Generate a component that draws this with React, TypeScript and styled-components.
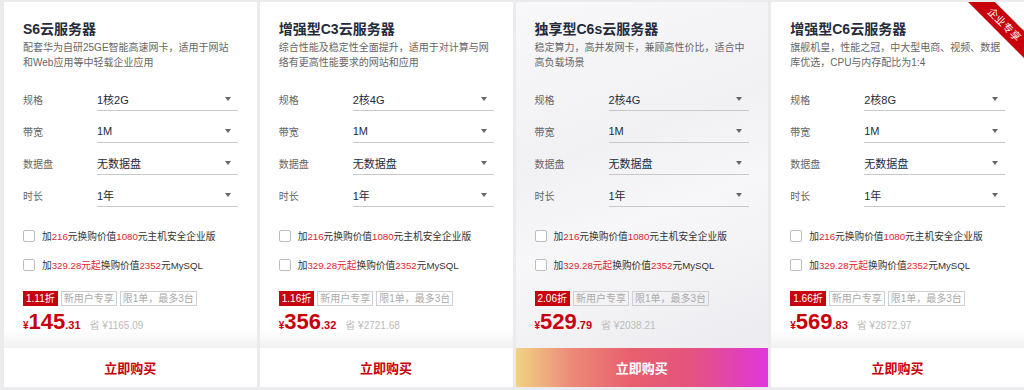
import * as React from 'react'
import styled, { createGlobalStyle } from 'styled-components'

const RED = '#c7000b'

const GlobalStyle = createGlobalStyle`
  body {
    margin: 0;
    background: #ebebee;
    font-family: 'Liberation Sans', 'Noto Sans CJK SC', sans-serif;
    color: #333;
  }
`

interface Plan {
  title: string
  desc: string[]
  spec: string
  discount: string
  price: string
  cents: string
  saved: string
  featured?: boolean
  ribbon?: string
}

const plans: Plan[] = [
  {
    title: 'S6云服务器',
    desc: ['配套华为自研25GE智能高速网卡，适用于网站', '和Web应用等中轻载企业应用'],
    spec: '1核2G',
    discount: '1.11折',
    price: '145',
    cents: '.31',
    saved: '省 ¥1165.09',
  },
  {
    title: '增强型C3云服务器',
    desc: ['综合性能及稳定性全面提升，适用于对计算与网', '络有更高性能要求的网站和应用'],
    spec: '2核4G',
    discount: '1.16折',
    price: '356',
    cents: '.32',
    saved: '省 ¥2721.68',
  },
  {
    title: '独享型C6s云服务器',
    desc: ['稳定算力，高并发网卡，兼顾高性价比，适合中', '高负载场景'],
    spec: '2核4G',
    discount: '2.06折',
    price: '529',
    cents: '.79',
    saved: '省 ¥2038.21',
    featured: true,
  },
  {
    title: '增强型C6云服务器',
    desc: ['旗舰机皇，性能之冠，中大型电商、视频、数据', '库优选，CPU与内存配比为1:4'],
    spec: '2核8G',
    discount: '1.66折',
    price: '569',
    cents: '.83',
    saved: '省 ¥2872.97',
    ribbon: '企业专享',
  },
]

const Page = styled.div`
  display: flex;
  gap: 3px;
  padding: 2px 0 3px 4px;
  height: 390px;
  box-sizing: border-box;
  overflow: hidden;
`

const Card = styled.div`
  flex: 1;
  min-width: 0;
  display: flex;
  flex-direction: column;
  position: relative;
  overflow: hidden;
  background: #fff;
`

const Body = styled.div<{ $featured?: boolean }>`
  flex: 1;
  padding: 16px 19px 0;
  background: ${(p) =>
    p.$featured
      ? 'linear-gradient(160deg, #f8f8fa 0%, #f1f1f4 40%, #f7f7f9 60%, #ececf0 100%)'
      : 'linear-gradient(to bottom, #fff calc(100% - 18px), #f1f1f2 100%)'};
`

const Title = styled.h2`
  margin: 0;
  font-size: 14px;
  line-height: 22px;
  font-weight: bold;
  color: #252b3a;
  white-space: nowrap;
`

const Desc = styled.p`
  margin: 0;
  font-size: 10px;
  line-height: 15px;
  color: #666;
  white-space: nowrap;
`

const Options = styled.div`
  display: flex;
  flex-direction: column;
  gap: 8px;
  margin-top: 17px;
`

const OptionRow = styled.div`
  display: flex;
  align-items: center;
  height: 24px;
`

const OptionLabel = styled.span`
  width: 74px;
  flex: none;
  font-size: 10px;
  color: #666;
`

const Select = styled.div`
  flex: 1;
  display: flex;
  align-items: center;
  justify-content: space-between;
  height: 24px;
  box-sizing: border-box;
  border-bottom: 1px solid #c9c9cc;
  padding: 0 7px 0 0;
  font-size: 11px;
  color: #252b3a;
`

const Caret = styled.span`
  width: 0;
  height: 0;
  border-left: 3px solid transparent;
  border-right: 3px solid transparent;
  border-top: 4px solid #666;
`

const Addons = styled.div`
  display: flex;
  flex-direction: column;
  gap: 9px;
  margin-top: 19px;
`

const Addon = styled.label`
  display: flex;
  align-items: center;
  gap: 7px;
  height: 20px;
  font-size: 9.7px;
  color: #333;
  white-space: nowrap;
`

const Box = styled.span`
  width: 12px;
  height: 12px;
  flex: none;
  box-sizing: border-box;
  border: 1px solid #bdbdc0;
  border-radius: 2px;
  background: #fff;
`

const Hot = styled.span`
  color: #e0242e;
`

const Tags = styled.div`
  display: flex;
  gap: 3px;
  margin-top: 16px;
`

const Tag = styled.span<{ $solid?: boolean }>`
  height: 15px;
  line-height: 13px;
  padding: 0 2px;
  box-sizing: border-box;
  font-size: 10px;
  white-space: nowrap;
  border: 1px solid ${(p) => (p.$solid ? RED : '#cfcfd2')};
  background: ${(p) => (p.$solid ? RED : 'transparent')};
  color: ${(p) => (p.$solid ? '#fff' : '#aaa')};
`

const PriceRow = styled.div`
  display: flex;
  align-items: baseline;
  height: 28px;
  line-height: 28px;
  margin-top: 2px;
  color: ${RED};
  font-weight: bold;
`

const Yen = styled.span`
  font-size: 10px;
`

const Amount = styled.span`
  font-size: 22px;
`

const Cents = styled.span`
  font-size: 11px;
`

const Saved = styled.span`
  margin-left: 9px;
  font-size: 10px;
  font-weight: normal;
  color: #bbb;
`

const BuyButton = styled.button<{ $featured?: boolean }>`
  flex: none;
  height: 39px;
  border: none;
  outline: none;
  cursor: pointer;
  font-family: inherit;
  font-size: 13px;
  font-weight: bold;
  color: ${(p) => (p.$featured ? '#fff' : RED)};
  background: ${(p) =>
    p.$featured
      ? 'linear-gradient(90deg, #f1d384 0%, #ec8a78 22%, #e8606e 45%, #e4537f 70%, #e036dc 100%)'
      : '#fff'};
`

const Ribbon = styled.div`
  position: absolute;
  top: 13px;
  right: -25px;
  width: 90px;
  height: 19px;
  line-height: 19px;
  text-align: center;
  transform: rotate(45deg);
  background: ${RED};
  color: #fff;
  font-size: 10.5px;
`

const fields = (spec: string) => [
  ['规格', spec],
  ['带宽', '1M'],
  ['数据盘', '无数据盘'],
  ['时长', '1年'],
]

function PlanCard({ plan }: { plan: Plan }) {
  return (
    <Card>
      {plan.ribbon && <Ribbon>{plan.ribbon}</Ribbon>}
      <Body $featured={plan.featured}>
        <Title>{plan.title}</Title>
        {plan.desc.map((line) => (
          <Desc key={line}>{line}</Desc>
        ))}
        <Options>
          {fields(plan.spec).map(([label, value]) => (
            <OptionRow key={label}>
              <OptionLabel>{label}</OptionLabel>
              <Select>
                {value}
                <Caret />
              </Select>
            </OptionRow>
          ))}
        </Options>
        <Addons>
          <Addon>
            <Box />
            <span>
              加<Hot>216</Hot>元换购价值<Hot>1080</Hot>元主机安全企业版
            </span>
          </Addon>
          <Addon>
            <Box />
            <span>
              加<Hot>329.28元起</Hot>换购价值<Hot>2352</Hot>元MySQL
            </span>
          </Addon>
        </Addons>
        <Tags>
          <Tag $solid>{plan.discount}</Tag>
          <Tag>新用户专享</Tag>
          <Tag>限1单，最多3台</Tag>
        </Tags>
        <PriceRow>
          <Yen>¥</Yen>
          <Amount>{plan.price}</Amount>
          <Cents>{plan.cents}</Cents>
          <Saved>{plan.saved}</Saved>
        </PriceRow>
      </Body>
      <BuyButton $featured={plan.featured}>立即购买</BuyButton>
    </Card>
  )
}

export default function App() {
  return (
    <>
      <GlobalStyle />
      <Page>
        {plans.map((p) => (
          <PlanCard key={p.title} plan={p} />
        ))}
      </Page>
    </>
  )
}
